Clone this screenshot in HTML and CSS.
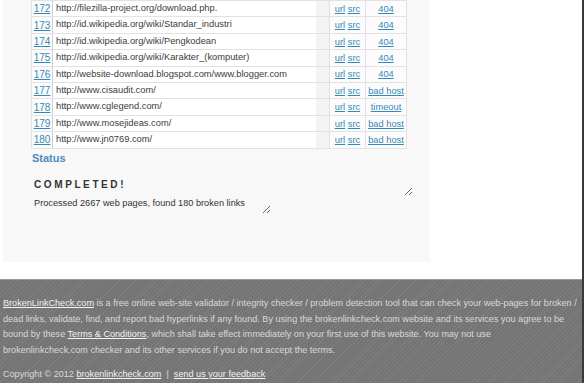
FILE: index.html
```html
<!doctype html>
<html lang="en">
  <head>
    <meta charset="UTF-8" />
    <title>Broken Link Check results</title>
    <link rel="stylesheet" href="styles.css">
  </head>
  <body>
    <div class="page">
      <div class="panel">
        <table class="results">
          <tr><td class="num"><a href="#">172</a></td><td class="url"><span>http://filezilla-project.org/download.php.</span></td><td class="links"><a href="#">url</a> <a href="#">src</a></td><td class="state"><a href="#">404</a></td></tr>
          <tr><td class="num"><a href="#">173</a></td><td class="url"><span>http://id.wikipedia.org/wiki/Standar_industri</span></td><td class="links"><a href="#">url</a> <a href="#">src</a></td><td class="state"><a href="#">404</a></td></tr>
          <tr><td class="num"><a href="#">174</a></td><td class="url"><span>http://id.wikipedia.org/wiki/Pengkodean</span></td><td class="links"><a href="#">url</a> <a href="#">src</a></td><td class="state"><a href="#">404</a></td></tr>
          <tr><td class="num"><a href="#">175</a></td><td class="url"><span>http://id.wikipedia.org/wiki/Karakter_(komputer)</span></td><td class="links"><a href="#">url</a> <a href="#">src</a></td><td class="state"><a href="#">404</a></td></tr>
          <tr><td class="num"><a href="#">176</a></td><td class="url"><span>http://website-download.blogspot.com/www.blogger.com</span></td><td class="links"><a href="#">url</a> <a href="#">src</a></td><td class="state"><a href="#">404</a></td></tr>
          <tr><td class="num"><a href="#">177</a></td><td class="url"><span>http://www.cisaudit.com/</span></td><td class="links"><a href="#">url</a> <a href="#">src</a></td><td class="state"><a href="#">bad host</a></td></tr>
          <tr><td class="num"><a href="#">178</a></td><td class="url"><span>http://www.cglegend.com/</span></td><td class="links"><a href="#">url</a> <a href="#">src</a></td><td class="state"><a href="#">timeout</a></td></tr>
          <tr><td class="num"><a href="#">179</a></td><td class="url"><span>http://www.mosejideas.com/</span></td><td class="links"><a href="#">url</a> <a href="#">src</a></td><td class="state"><a href="#">bad host</a></td></tr>
          <tr><td class="num"><a href="#">180</a></td><td class="url"><span>http://www.jn0769.com/</span></td><td class="links"><a href="#">url</a> <a href="#">src</a></td><td class="state"><a href="#">bad host</a></td></tr>
        </table>

        <h3 class="status-title">Status</h3>
        <textarea class="status-head" readonly>COMPLETED!</textarea>
        <textarea class="status-text" readonly>Processed 2667 web pages, found 180 broken links</textarea>
      </div>

      <footer class="footer">
        <p><a href="#">BrokenLinkCheck.com</a> is a free online web-site validator / integrity checker / problem detection tool that can check your web-pages for broken / dead links, validate, find, and report bad hyperlinks if any found. By using the brokenlinkcheck.com website and its services you agree to be bound by these <a href="#">Terms &amp; Conditions</a>, which shall take effect immediately on your first use of this website. You may not use<br>brokenlinkcheck.com checker and its other services if you do not accept the terms.</p>
        <p class="copy">Copyright © 2012 <a href="#">brokenlinkcheck.com</a> &nbsp;|&nbsp; <a href="#">send us your feedback</a></p>
      </footer>
    </div>
  </body>
</html>
```

FILE: styles.css
```css
body {
  margin: 0;
  padding: 0;
  background-color: #ffffff;
  font-family: "Liberation Sans", Arial, sans-serif;
  overflow: hidden;
}

.page {
  width: 582px;
  height: 381px;
  border-right: 2px solid #3a3a3a;
  border-bottom: 2px solid #4a4a4a;
  display: flex;
  flex-direction: column;
}

.panel {
  margin-left: 3px;
  width: 399px;
  height: 262px;
  flex-shrink: 0;
  padding-left: 28px;
  background-color: #f8f8f8;
  box-sizing: content-box;
}

.results {
  border-collapse: collapse;
  width: 376px;
  table-layout: fixed;
  font-size: 9.3px;
  border: 1px solid #c4c4c4;
  border-bottom-color: #a8a8a8;
}

.results td {
  height: 15.4px;
  padding: 0;
  border: 1px solid #e2e2e2;
  background-color: #fcfcfc;
  white-space: nowrap;
  overflow: hidden;
}

.results a {
  color: #3589b8;
}

.results .num {
  width: 20px;
  text-align: center;
  border-right-color: #d0d0d0;
  font-size: 10px;
}

.results .url {
  width: 276px;
  color: #3c3c3c;
  background-color: #f3f3f3;
}

.results .url span {
  display: block;
  width: 260px;
  padding-left: 3px;
  background-color: #ffffff;
  line-height: 15.4px;
}

.results .links {
  width: 35px;
  text-align: center;
  border-left-color: #d0d0d0;
}

.results .state {
  text-align: center;
}

.status-title {
  margin: 3px 0 0 1px;
  font-size: 11px;
  color: #4a8cba;
}

.status-head,
.status-text {
  display: block;
  border: none;
  background: transparent;
  font-family: "Liberation Sans", Arial, sans-serif;
  color: #333333;
  padding: 2px 3px;
  outline: none;
  overflow: hidden;
}

.status-head {
  margin-top: 13px;
  width: 376px;
  height: 15px;
  font-size: 10px;
  font-weight: bold;
  letter-spacing: 2.6px;
}

.status-text {
  margin-top: 0;
  width: 234px;
  height: 14px;
  font-size: 9.2px;
}

.footer {
  margin-top: 17px;
  flex-grow: 1;
  padding: 16px 2px 0 3px;
  color: #d9d9d9;
  font-size: 9.1px;
  line-height: 15.7px;
  border-top: 1px solid #9a9a9a;
  background-color: #7a7a7a;
  background-image: repeating-linear-gradient(135deg, #7d7d7d 0 1px, #747474 1px 3px);
}

.footer p {
  margin: 0;
}

.footer a {
  color: #f2f2f2;
}

.footer .copy {
  margin-top: 8px;
}
```
